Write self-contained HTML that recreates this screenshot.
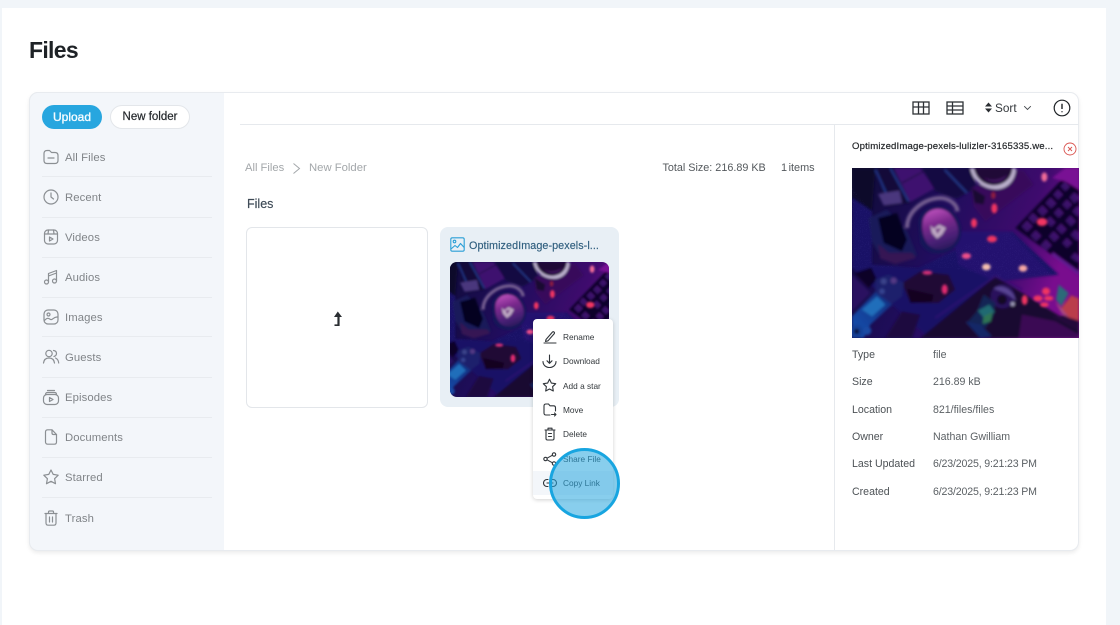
<!DOCTYPE html>
<html lang="en"><head><meta charset="utf-8"><title>Files</title>
<style>
*{box-sizing:border-box}
html,body{margin:0;padding:0;width:1120px;height:625px;overflow:hidden;background:#f1f5f9;font-family:"Liberation Sans",sans-serif}
.a{position:absolute}
.t{position:absolute;white-space:nowrap;line-height:16px;height:16px}
#page{position:absolute;left:2px;top:8px;width:1104px;height:617px;background:#fff}
#panel{left:29px;top:92px;width:1050px;height:459px;background:#fff;border:1px solid #e8ebef;border-radius:9px;box-shadow:0 2px 4px rgba(0,0,0,.08)}
#side{left:29px;top:92px;width:195px;height:459px;background:#f3f6fa;border-radius:9px 0 0 9px;border:1px solid #e8ebef;border-right:0}
.div{position:absolute;left:42px;width:170px;height:1px;background:#e8ebef}
.nav{left:65px;font-size:11.3px;color:#808488;letter-spacing:.1px}
.ic{position:absolute;fill:none;stroke:#8b8f93;stroke-width:1.2;stroke-linecap:round;stroke-linejoin:round}
.m{left:563px;font-size:8.3px;color:#33383c}
.mi{position:absolute;fill:none;stroke:#30353a;stroke-width:1.1;stroke-linecap:round;stroke-linejoin:round}
.k{left:852px;font-size:10.6px;color:#4d5256}
.v{left:933px;font-size:10.6px;color:#5c6165}
.d{letter-spacing:-.16px}
</style></head><body>
<svg width="0" height="0" style="position:absolute">
<defs>
<linearGradient id="gbg" x1="0" y1="0" x2="1" y2=".3"><stop offset="0" stop-color="#0e0e38"/><stop offset=".45" stop-color="#26106c"/><stop offset=".8" stop-color="#4e0e82"/><stop offset="1" stop-color="#9a10ac"/></linearGradient>
<linearGradient id="gc" x1=".35" y1="0" x2=".65" y2="1"><stop offset="0" stop-color="#ee66e6"/><stop offset=".35" stop-color="#9c34aa"/><stop offset=".75" stop-color="#5a2a8c"/><stop offset="1" stop-color="#33206a"/></linearGradient>
<linearGradient id="gb" x1="0" y1="1" x2="1" y2="0"><stop offset="0" stop-color="#1468d8"/><stop offset="1" stop-color="#173c98"/></linearGradient>
<linearGradient id="gk" x1="0" y1="1" x2="1" y2="0"><stop offset="0" stop-color="#34126c"/><stop offset="1" stop-color="#5f1a90"/></linearGradient>
<filter id="bl" x="-5%" y="-5%" width="110%" height="110%"><feGaussianBlur stdDeviation="4"/></filter>
<filter id="sp" x="0" y="0" width="100%" height="100%"><feTurbulence type="fractalNoise" baseFrequency=".5" numOctaves="2" seed="4"/><feColorMatrix values="0 0 0 0 .3  0 0 0 0 .25  0 0 0 0 .9  0 0 0 4 -2.300"/></filter>
<clipPath id="road"><path d="M0 60 60 130 60 290 200 300 340 230 480 190 620 320 440 330 300 300 60 300 0 300Z"/></clipPath>
<symbol id="photo" viewBox="0 0 681 510" preserveAspectRatio="xMidYMid slice">
<rect width="681" height="510" fill="url(#gbg)"/>
<g filter="url(#bl)">
<path d="M0 60 60 130 60 290 200 300 340 230 480 190 620 320 440 340 220 500 0 300Z" fill="#1b1478"/>
<path d="M300 190 470 190 600 320 430 340 320 290Z" fill="#2c1484"/>
<path d="M0 0H70L60 130 0 90Z" fill="#0d0a2c"/>
<path d="M75 0H120L175 105 100 115Z" fill="#12103e"/>
<path d="M70 5 102 75M115 0 170 100" stroke="#2648ac" stroke-width="5" fill="none"/>
<path d="M125 0H205L247 62 175 102Z" fill="#4e1884"/>
<path d="M150 45 215 10" stroke="#260c50" stroke-width="4"/>
<path d="M78 78 142 68 150 105 95 112Z" fill="#5c4696"/>
<path d="M210 0H360L372 60 315 92 250 70Z" fill="#13104a"/>
<path d="M278 5 345 75" stroke="#2a48a8" stroke-width="5"/>
<path d="M365 115 358 60 490 8 515 8 545 50 400 160Z" fill="#440e6a"/>
<path d="M355 0H492C490 45 458 68 422 63 388 58 360 35 355 0Z" fill="#f2e8ff"/>
<path d="M365 0H482C478 36 452 53 422 52 395 50 372 32 365 0Z" fill="#260a3a"/>
<path d="M395 28C415 40 445 38 465 20 455 45 420 52 395 28Z" fill="#501c70"/>
<path d="M360 60 400 85 395 110 368 105Z" fill="#1c0a30"/>
<path d="M50 150 105 125 165 190 195 262 130 288 85 265 60 220Z" fill="#1a2468"/>
<path d="M78 150 135 135 165 215 150 250 95 225Z" fill="#05041a"/>
<path d="M78 228 110 255 180 255 192 270 130 288 85 272Z" fill="#421a60"/>
<path d="M200 170C195 125 250 100 295 125 330 155 340 205 310 235 280 265 225 265 205 225Z" fill="#181f66"/>
<path d="M165 180C165 130 215 92 265 90 300 92 316 115 316 130" fill="none" stroke="#8f76ac" stroke-width="13"/>
<path d="M212 165C215 125 262 110 292 135 322 165 330 205 300 232 275 250 240 248 225 225 212 205 210 185 212 165Z" fill="url(#gc)"/>
<path d="M235 172 245 182 262 170 282 180 270 200 255 212 240 195Z" fill="#f4dcf2"/>
<path d="M250 183 268 180 256 198Z" fill="#8f429e"/>
<path d="M490 180 632 32 681 65V322L602 262Z" fill="#10062a"/>
<path d="M600 30 640 0H681V65L640 40Z" fill="#9a12b4"/>
<g fill="url(#gk)">
<path d="M508 175l17-17 17 17-17 17z"/><path d="M528 150l15-15 17 17-15 15z"/><path d="M555 128l16-16 17 17-16 16z"/><path d="M580 105l16-16 17 17-16 16z"/><path d="M603 80l15-15 15 15-15 15z"/><path d="M625 55l14-14 15 15-14 14z"/>
<path d="M535 203l16-16 17 17-16 16z"/><path d="M580 160l14-14 17 17-14 14z"/><path d="M605 135l15-15 15 15-15 15z"/><path d="M630 110l15-15 15 15-15 15z"/><path d="M652 88l15-15 14 14v6l-14 14z"/>
<path d="M565 232l17-17 17 17-17 17z"/><path d="M590 205l15-15 17 17-15 15z"/><path d="M612 182l15-15 17 17-15 15z"/><path d="M640 158l15-15 17 17-15 15z"/><path d="M660 130l15-15 6 6v18l-6 6z"/>
<path d="M630 225l15-15 15 15-15 15z"/><path d="M655 200l15-15 11 11v20l-11 0z"/><path d="M655 268l14-14 12 12v12l-6 4z"/>
</g>
<path d="M602 252 681 310V322L600 262Z" fill="#7a22b0"/>
<path d="M0 320 55 375 0 430Z" fill="#321670"/>
<path d="M8 315 58 298 75 335 50 360Z" fill="#100626"/>
<path d="M150 345 205 310 290 320 310 365 260 405 175 405Z" fill="#260b38"/>
<path d="M165 362 245 380 240 402 175 405Z" fill="#12051e"/>
<path d="M70 335 110 320 155 345 150 385 115 410 70 375Z" fill="#222a80"/>
<circle cx="95" cy="340" r="9" fill="#4a58a8"/><circle cx="125" cy="338" r="9" fill="#6a4ca0"/><circle cx="90" cy="370" r="8" fill="#4258b0"/>
<path d="M0 445 70 372 120 410 55 470 35 510H0Z" fill="url(#gb)"/>
<path d="M30 425 75 385 100 410 60 445Z" fill="#2890e6"/>
<circle cx="14" cy="490" r="20" fill="#1854b8"/><circle cx="14" cy="490" r="8" fill="#081440"/><circle cx="45" cy="488" r="13" fill="#1a60c8"/>
<path d="M100 510 150 430 205 440 180 510Z" fill="#240c44"/>
<path d="M205 510 430 325 681 480V510Z" fill="#1e0a32"/>
<path d="M250 450 430 325 510 365" stroke="#42148c" stroke-width="5" fill="none" opacity=".8"/>
<path d="M510 440 610 460 681 500V510H500Z" fill="#480e60"/>
<path d="M600 445 681 490V440Z" fill="#2a0a40"/>
<circle cx="452" cy="385" r="36" fill="#32186c"/>
<path d="M425 362C450 345 485 365 492 400 470 375 445 370 425 362Z" fill="#7058b4"/>
<circle cx="482" cy="408" r="6" fill="#d0d0e8"/><circle cx="450" cy="395" r="15" fill="#140722"/>
<path d="M395 380 430 405 425 440 400 480 345 465 375 430Z" fill="#142f62"/>
<path d="M378 428 412 410 428 432 396 450Z" fill="#288a88"/>
<path d="M395 445 422 432 416 460 392 468Z" fill="#389860"/>
<path d="M340 460 385 470 420 505 385 510Z" fill="#16307a"/>
<path d="M612 395 620 350 650 375 628 415Z" fill="#368a90"/>
<path d="M628 420 658 382 681 392V458L650 448Z" fill="#f05055"/>
<path d="M610 402 628 420 650 448 630 438Z" fill="#d8609c"/>
</g>
<rect width="681" height="510" fill="#12042c" opacity=".24"/>
<rect width="681" height="510" filter="url(#sp)" clip-path="url(#road)" opacity=".14"/>
<g filter="url(#bl)" fill="#f03462">
<ellipse cx="366" cy="165" rx="9" ry="14"/><ellipse cx="427" cy="121" rx="9" ry="15"/><ellipse cx="420" cy="213" rx="15" ry="10"/><ellipse cx="343" cy="264" rx="14" ry="9" fill="#f0508a"/>
<ellipse cx="570" cy="162" rx="16" ry="12"/><ellipse cx="577" cy="27" rx="9" ry="14" fill="#f06c98"/><ellipse cx="424" cy="82" rx="7" ry="11" fill="#8e1a40"/>
<ellipse cx="226" cy="314" rx="15" ry="6" fill="#d83078"/><ellipse cx="278" cy="364" rx="9" ry="15" fill="#e02a70"/>
<ellipse cx="518" cy="396" rx="9" ry="15"/><ellipse cx="558" cy="391" rx="14" ry="9"/><ellipse cx="582" cy="370" rx="12" ry="11"/><ellipse cx="590" cy="391" rx="14" ry="7"/><ellipse cx="577" cy="410" rx="13" ry="7"/>
<ellipse cx="403" cy="297" rx="13" ry="10" fill="#f6c0b0"/><ellipse cx="513" cy="301" rx="13" ry="10" fill="#f6a8a4"/>
</g>
</symbol>
</defs>
</svg>

<div id="page"></div>
<div class="t" style="left:29px;top:36px;height:28px;line-height:28px;font-size:23px;font-weight:bold;color:#1e2226;letter-spacing:-.7px">Files</div>

<div id="panel" class="a"></div>
<div id="side" class="a"></div>

<div class="a" style="left:42px;top:105px;width:60px;height:24px;border-radius:12px;background:#27a6df"></div>
<div class="t" style="left:42px;top:109px;width:60px;text-align:center;font-size:12px;color:#f4fbff;-webkit-text-stroke:.35px #f4fbff">Upload</div>
<div class="a" style="left:110px;top:105px;width:80px;height:24px;border-radius:12px;background:#fff;border:1px solid #e3e6ea"></div>
<div class="t" style="left:110px;top:109px;width:80px;text-align:center;font-size:11.5px;color:#24282c;-webkit-text-stroke:.2px #24282c">New folder</div>

<div class="div" style="top:176px"></div><div class="div" style="top:217px"></div><div class="div" style="top:257px"></div><div class="div" style="top:297px"></div><div class="div" style="top:336px"></div><div class="div" style="top:377px"></div><div class="div" style="top:417px"></div><div class="div" style="top:457px"></div><div class="div" style="top:497px"></div>

<div class="t nav" style="top:149.500px">All Files</div>
<div class="t nav" style="top:189.500px">Recent</div>
<div class="t nav" style="top:230px">Videos</div>
<div class="t nav" style="top:270px">Audios</div>
<div class="t nav" style="top:310px">Images</div>
<div class="t nav" style="top:350px">Guests</div>
<div class="t nav" style="top:390px">Episodes</div>
<div class="t nav" style="top:430px">Documents</div>
<div class="t nav" style="top:470px">Starred</div>
<div class="t nav" style="top:511px">Trash</div>

<svg class="ic" style="left:42px;top:148px" width="18" height="18" viewBox="0 0 18 18"><path d="M2 5.500C2 3.500 3 2.500 5 2.500h2.500l2 2H13c2 0 3 1 3 3v5c0 2.200-1 3-3 3H5c-2 0-3-.8-3-3z"/><path d="M6 10h6"/></svg>
<svg class="ic" style="left:42px;top:188px" width="18" height="18" viewBox="0 0 18 18"><circle cx="9" cy="9" r="7"/><path d="M9 5v4l2.500 2"/></svg>
<svg class="ic" style="left:42px;top:228px" width="18" height="18" viewBox="0 0 18 18"><rect x="2.500" y="2" width="13" height="14" rx="3.500"/><path d="M2.500 6h13M6.500 2l-.5 4M11.500 2l.5 4"/><path d="M7.500 9l3.500 2-3.500 2z"/></svg>
<svg class="ic" style="left:42px;top:268px" width="18" height="18" viewBox="0 0 18 18"><circle cx="4.500" cy="14" r="2"/><circle cx="12.500" cy="13" r="2"/><path d="M6.500 14V5.500L14.500 2.500V13M6.500 8l8-3"/></svg>
<svg class="ic" style="left:42px;top:308px" width="18" height="18" viewBox="0 0 18 18"><rect x="2" y="2" width="14" height="14" rx="4"/><circle cx="6.500" cy="6.500" r="1.500"/><path d="M2.500 12.500c3-3.500 4.500-2 6-1 2 1 3-3 7-2.500"/></svg>
<svg class="ic" style="left:42px;top:348px" width="18" height="18" viewBox="0 0 18 18"><circle cx="7" cy="5.500" r="3.200"/><path d="M1.500 15c.5-3.500 2.500-5 5.500-5s5 1.500 5.500 5M11.500 2.500c2 .3 3 1.500 3 3s-1 2.500-2.500 3M13.500 10c1.800.8 3 2.500 3.200 5"/></svg>
<svg class="ic" style="left:42px;top:388px" width="18" height="18" viewBox="0 0 18 18"><rect x="1.500" y="6.500" width="15" height="10" rx="3.500"/><path d="M3.500 6.500c0-1.500 1-2 2-2h7c1 0 2 .5 2 2M5.500 2.500h7"/><path d="M7.500 9.500l3.500 2-3.500 2z"/></svg>
<svg class="ic" style="left:42px;top:428px" width="18" height="18" viewBox="0 0 18 18"><path d="M3.500 4c0-1.500 1-2.200 2.200-2.200h4.300L14.500 6.500V14c0 1.500-1 2.200-2.200 2.200H5.700c-1.200 0-2.200-.7-2.200-2.200z"/><path d="M10 2v3c0 1 .6 1.500 1.500 1.500h3"/></svg>
<svg class="ic" style="left:42px;top:468px" width="18" height="18" viewBox="0 0 18 18"><path d="M9 2l2.200 4.400 5 .8-3.600 3.500.9 5L9 13.300 4.500 15.700l.9-5L1.800 7.200l5-.8z"/></svg>
<svg class="ic" style="left:42px;top:509px" width="18" height="18" viewBox="0 0 18 18"><path d="M3 4.500h12M6.500 4.500V3c0-.7.5-1 1-1h3c.5 0 1 .3 1 1v1.500M4 4.500V14c0 1.500 1 2.200 2.200 2.200h5.600c1.200 0 2.200-.7 2.200-2.200V4.500M7.500 8v5M10.500 8v5"/></svg>

<div class="a" style="left:240px;top:124px;width:839px;height:1px;background:#e6e9ed"></div>
<div class="a" style="left:834px;top:125px;width:1px;height:425px;background:#e6e9ed"></div>

<svg class="a" style="left:912px;top:101px;fill:none;stroke:#2e3236;stroke-width:1.300" width="18" height="14" viewBox="0 0 18 14"><rect x="1" y="1" width="16" height="12"/><path d="M1 6h16M6.500 1v12M11.500 1v12"/></svg>
<svg class="a" style="left:946px;top:101px;fill:none;stroke:#2e3236;stroke-width:1.300" width="18" height="14" viewBox="0 0 18 14"><rect x="1" y="1" width="16" height="12"/><path d="M1 5h16M1 9h16M6.500 1v12"/></svg>
<svg class="a" style="left:984px;top:102px" width="9" height="11" viewBox="0 0 9 11"><path d="M4.500 .5L8 4.500H1zM4.500 10.500L1 6.500H8z" fill="#2a2e32"/></svg>
<div class="t" style="left:995px;top:100px;font-size:11.800px;color:#34383c">Sort</div>
<svg class="a" style="left:1023px;top:105px;fill:none;stroke:#44484c;stroke-width:.9" width="9" height="6" viewBox="0 0 9 6"><path d="M1.200 1.200l3.300 3.300 3.300-3.300"/></svg>
<svg class="a" style="left:1053px;top:99px;fill:none;stroke:#1e2226;stroke-width:1.200" width="18" height="18" viewBox="0 0 18 18"><circle cx="9" cy="9" r="7.800"/><path d="M9 4.800v5.200M9 12.300v1" stroke-width="1.400"/></svg>

<div class="t" style="left:245px;top:160px;font-size:11.200px;color:#a3a7aa">All Files</div>
<svg class="a" style="left:292px;top:162px;fill:none;stroke:#a3a7aa;stroke-width:1" width="9" height="13" viewBox="0 0 9 13"><path d="M1.500 1.500l6 5-6 5"/></svg>
<div class="t" style="left:309px;top:160px;font-size:11.300px;color:#a3a7aa">New Folder</div>
<div class="t" style="left:662.500px;top:160px;font-size:10.800px;color:#54595d">Total Size: 216.89 KB</div>
<div class="t" style="left:781px;top:160px;font-size:10.900px;color:#54595d;word-spacing:-1.500px">1 items</div>
<div class="t" style="left:247px;top:196px;font-size:12.500px;color:#3d4a56;-webkit-text-stroke:.15px #3d4a56">Files</div>

<div class="a" style="left:246px;top:227px;width:182px;height:181px;background:#fff;border:1px solid #e3e6ea;border-radius:6px"></div>
<svg class="a" style="left:331px;top:310px" width="13" height="17" viewBox="0 0 13 17"><path d="M6.800 1.500L11 7H8.600v9H3.500v-1.600h2.900V7H3z" fill="#2a2e32"/></svg>

<div class="a" style="left:440px;top:227px;width:179px;height:180px;background:#e8eff5;border-radius:8px"></div>
<svg class="a" style="left:450px;top:237px;fill:none;stroke:#2a9fd6;stroke-width:1.100;stroke-linejoin:round" width="15" height="15" viewBox="0 0 15 15"><rect x=".8" y=".8" width="13.400" height="13.400" rx="1.500"/><circle cx="4.500" cy="4.500" r="1.300"/><path d="M1 12l4-3.500 2.500 2L10.500 6.500l3.700 4"/></svg>
<div class="t" style="left:469px;top:237.500px;font-size:10.800px;color:#2f5e7e;-webkit-text-stroke:.15px #2f5e7e;letter-spacing:.06px">OptimizedImage-pexels-l...</div>
<svg class="a" style="left:450px;top:262px;border-radius:7px" width="159" height="135"><use href="#photo" width="159" height="135"/></svg>

<div class="a" style="left:533px;top:319px;width:80px;height:180px;background:#fff;border-radius:4px;box-shadow:0 1px 4px rgba(0,0,0,.18)"></div>
<div class="a" style="left:533px;top:471px;width:80px;height:24px;background:#f3f6fa"></div>
<div class="t m" style="top:329px">Rename</div>
<div class="t m" style="top:353px">Download</div>
<div class="t m" style="top:378px">Add a star</div>
<div class="t m" style="top:402px">Move</div>
<div class="t m" style="top:426px">Delete</div>
<div class="t m" style="top:451px">Share File</div>
<div class="t m" style="top:475px">Copy Link</div>

<svg class="mi" style="left:543px;top:330px" width="14" height="14" viewBox="0 0 14 14"><path d="M3 9.500L9.500 2c1-.8 2.500.4 1.800 1.600L5 10.800l-2.500.7zM1 13h12"/></svg>
<svg class="mi" style="left:542px;top:354px" width="15" height="15" viewBox="0 0 15 15"><path d="M7.500 1v8M5 6.800l2.500 2.500L10 6.800M1 7.500c0 3.500 2.800 6 6.500 6s6.500-2.500 6.500-6"/></svg>
<svg class="mi" style="left:542px;top:378px" width="15" height="15" viewBox="0 0 15 15"><path d="M7.500 1.200l1.900 3.900 4.300.6-3.100 3 .7 4.300-3.800-2-3.800 2 .7-4.300-3.100-3 4.300-.6z"/></svg>
<svg class="mi" style="left:543px;top:403px" width="14" height="14" viewBox="0 0 14 14"><path d="M7 12H3c-1.400 0-2-.8-2-2V3c0-1.200.6-2 2-2h2.500l1.500 1.800h3.500c1.400 0 2 .8 2 2V8M8.500 11.500h4.500M11.500 10l1.500 1.500-1.500 1.500"/></svg>
<svg class="mi" style="left:543px;top:427px" width="14" height="14" viewBox="0 0 14 14"><path d="M2 3h10M5 3V1.200h4V3M3 3v8.500c0 1 .6 1.500 1.500 1.500h5c.9 0 1.500-.5 1.500-1.500V3M5.500 6.500h3M5.500 9.500h3"/></svg>
<svg class="mi" style="left:543px;top:452px" width="14" height="14" viewBox="0 0 14 14"><circle cx="2.500" cy="7" r="1.700"/><circle cx="11" cy="2.500" r="1.700"/><circle cx="11" cy="11.500" r="1.700"/><path d="M4 6.200l5.500-3M4 7.800l5.500 3"/></svg>
<svg class="mi" style="left:543px;top:476px" width="14" height="14" viewBox="0 0 14 14"><path d="M5 3.500H4a3.500 3.500 0 0 0 0 7h1M9 3.500h1a3.500 3.500 0 0 1 0 7H9M4 7h6"/></svg>

<div class="a" style="left:549px;top:448px;width:71px;height:71px;border-radius:50%;background:rgba(39,166,223,.55);border:3px solid #18a5e0"></div>

<div class="t" style="left:852px;top:139px;font-size:9.600px;color:#26292c;-webkit-text-stroke:.2px #26292c;letter-spacing:.15px">OptimizedImage-pexels-lulizler-3165335.we...</div>
<svg class="a" style="left:1063px;top:142px;fill:none;stroke:#d9534f;stroke-width:.9" width="14" height="14" viewBox="0 0 14 14"><circle cx="7" cy="7" r="6"/><path d="M5 5l4 4M9 5l-4 4"/></svg>
<svg class="a" style="left:852px;top:168px" width="227" height="170"><use href="#photo" width="227" height="170"/></svg>

<div class="t k" style="top:346.500px">Type</div><div class="t v" style="top:346.500px">file</div>
<div class="t k" style="top:374px">Size</div><div class="t v" style="top:374px">216.89 kB</div>
<div class="t k" style="top:401.500px">Location</div><div class="t v" style="top:401.500px">821/files/files</div>
<div class="t k" style="top:428.500px">Owner</div><div class="t v" style="top:428.500px">Nathan Gwilliam</div>
<div class="t k" style="top:456px">Last Updated</div><div class="t v d" style="top:456px">6/23/2025, 9:21:23 PM</div>
<div class="t k" style="top:483.500px">Created</div><div class="t v d" style="top:483.500px">6/23/2025, 9:21:23 PM</div>
</body></html>
